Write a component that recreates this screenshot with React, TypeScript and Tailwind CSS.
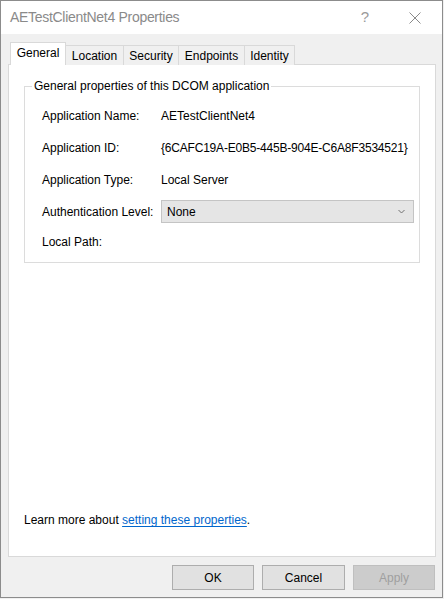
import React from "react";

const font = { fontFamily: '"Liberation Sans", Arial, sans-serif' };

function Row({ label, children }: { label: string; children?: React.ReactNode }) {
  return (
    <div className="flex items-center h-[23px]">
      <div className="w-[119px] shrink-0 whitespace-nowrap">{label}</div>
      <div className="flex-1 whitespace-nowrap">{children}</div>
    </div>
  );
}

export default function App() {
  const tabs = ["Location", "Security", "Endpoints", "Identity"];
  const tabW = [58, 55, 66, 50];
  return (
    <div
      className="w-[444px] h-[599px] bg-[#f0f0f0] text-[12px] text-black overflow-hidden"
      style={font}
    >
      <div className="w-[443px] h-[598px] border border-[#8c8c8c] flex flex-col">
        {/* title bar */}
        <div className="h-[33px] bg-white flex items-center shrink-0">
          <div className="pl-[9px] text-[14px] text-[#8a8a8a] tracking-[-0.3px] flex-1">
            AETestClientNet4 Properties
          </div>
          <div className="w-[46px] text-center text-[15px] text-[#9a9a9a] mr-[4px]">?</div>
          <div className="w-[46px] flex justify-center mr-[4px]">
            <svg width="12" height="12" viewBox="0 0 12 12">
              <path d="M0.5 0.5 L11.5 11.5 M11.5 0.5 L0.5 11.5" stroke="#8a8a8a" strokeWidth="1" />
            </svg>
          </div>
        </div>
        {/* body */}
        <div className="flex-1 flex flex-col pl-[7px] pr-[6px] pt-[9px]">
          <div className="flex items-end h-[22px] pl-[2px] relative z-10">
            <div className="w-[56px] h-[23px] bg-white border border-[#d9d9d9] border-b-0 flex items-center justify-center pb-[2px]">
              General
            </div>
            {tabs.map((t, i) => (
              <div
                key={t}
                style={{ width: tabW[i] }}
                className="h-[20px] bg-[#f0f0f0] border border-[#d9d9d9] border-l-0 border-b-0 flex items-center justify-center"
              >
                {t}
              </div>
            ))}
          </div>
          <div className="h-[493px] bg-white border border-[#d9d9d9] -mt-px flex flex-col px-[15px]">
            <div className="mt-[21px] h-[177px] border border-[#dcdcdc] relative">
              <div className="absolute -top-[9px] left-[7px] bg-white px-[2px] leading-[16px]">
                General properties of this DCOM application
              </div>
              <div className="pt-[17px] pl-[17px] pr-[5px] flex flex-col gap-[9px]">
                <Row label="Application Name:">AETestClientNet4</Row>
                <Row label="Application ID:">
                  <span className="tracking-[-0.2px]">{"{6CAFC19A-E0B5-445B-904E-C6A8F3534521}"}</span>
                </Row>
                <Row label="Application Type:">Local Server</Row>
                <Row label="Authentication Level:">
                  <div className="h-[23px] bg-[#e5e5e5] border border-[#c4c4c4] flex items-center pl-[5px] pr-[8px]">
                    <span className="flex-1">None</span>
                    <svg width="7" height="5" viewBox="0 0 7 5">
                      <path d="M0.5 1 L3.5 4 L6.5 1" stroke="#707070" strokeWidth="1" fill="none" />
                    </svg>
                  </div>
                </Row>
                <div className="h-[14px] mt-[1px]">Local Path:</div>
              </div>
            </div>
            <div className="flex-1" />
            <div className="mb-[27px]">
              Learn more about{" "}
              <span className="text-[#0066cc] underline underline-offset-2">setting these properties</span>.
            </div>
          </div>
          <div className="flex justify-end mt-[8px] pr-px">
            <div className="w-[82px] h-[25px] bg-[#e1e1e1] border border-[#adadad] flex items-center justify-center">
              OK
            </div>
            <div className="w-[83px] h-[25px] ml-[8px] bg-[#e1e1e1] border border-[#adadad] flex items-center justify-center">
              Cancel
            </div>
            <div className="w-[82px] h-[25px] ml-[8px] bg-[#cccccc] border border-[#bfbfbf] text-[#9f9f9f] flex items-center justify-center">
              Apply
            </div>
          </div>
        </div>
      </div>
    </div>
  );
}
